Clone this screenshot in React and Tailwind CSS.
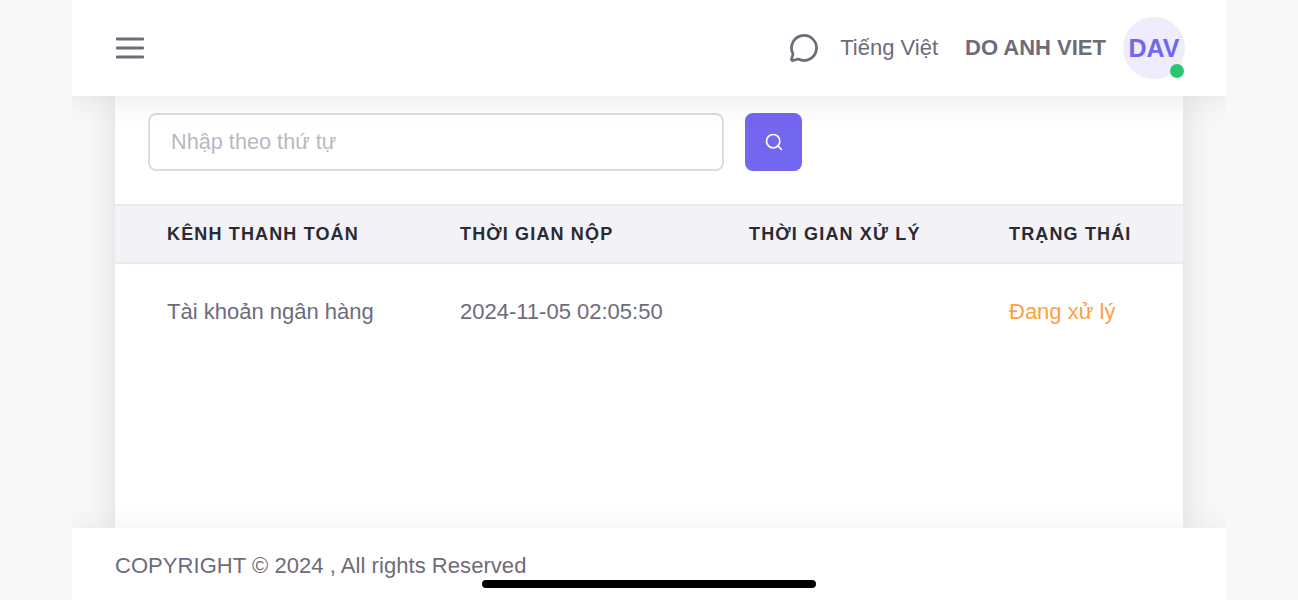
import React from 'react';
import { MessageCircle, Search } from 'lucide-react';

const FONT = "font-['Liberation_Sans',Arial,sans-serif]";

function Header() {
  return (
    <header className="relative z-10 flex h-24 shrink-0 items-center justify-between bg-white pl-[44px] pr-[41px] shadow-[0_0_32px_rgba(40,40,50,0.13)]">
      <svg width="28" height="24" viewBox="0 0 28 24" className="text-[#6e6b7b]">
        <path d="M1 3h26M1 12h26M1 21h26" stroke="currentColor" strokeWidth="2.8" strokeLinecap="round" />
      </svg>
      <div className="flex items-center">
        <MessageCircle size={30} strokeWidth={2.2} className="text-[#6e6b7b]" />
        <span className="ml-[21px] pb-[2px] text-[22px] text-[#6e6b7b]">Tiếng Việt</span>
        <span className="ml-[27px] pb-[2px] text-[22px] font-bold text-[#6e6b7b]">DO ANH VIET</span>
        <div className="relative ml-[17px] flex h-[62px] w-[62px] items-center justify-center rounded-full bg-[#eeecfd]">
          <span className="pt-[2px] text-[25px] font-bold text-[#7367f0]">DAV</span>
          <span className="absolute bottom-[1px] right-[1px] h-[14px] w-[14px] rounded-full bg-[#28c76f]" />
        </div>
      </div>
    </header>
  );
}

function SearchBar() {
  return (
    <div className="flex gap-[21px] pl-[33px] pt-[17px] pb-[33px]">
      <input
        placeholder="Nhập theo thứ tự"
        className="h-[58px] w-[576px] rounded-lg border-[2px] border-[#dddbe3] bg-white px-[21px] text-[21.7px] outline-none placeholder:text-[#b9b9c3]"
      />
      <button type="button" className="flex h-[58px] w-[57px] items-center justify-center rounded-lg bg-[#7367f0]">
        <Search size={20} strokeWidth={2} className="text-white" />
      </button>
    </div>
  );
}

function PaymentTable() {
  return (
    <div>
      <div className="flex h-[60px] items-center border-y-2 border-[#ebe9f1] bg-[#f3f2f7] text-[18px] font-bold tracking-[1.15px] text-[#2a2a32]">
        <div className="w-[293px] pl-[52px]">KÊNH THANH TOÁN</div>
        <div className="w-[289px] pl-[52px]">THỜI GIAN NỘP</div>
        <div className="w-[260px] pl-[52px]">THỜI GIAN XỬ LÝ</div>
        <div className="pl-[52px]">TRẠNG THÁI</div>
      </div>
      <div className="flex h-[95px] items-center text-[22px] text-[#6e6b7b]">
        <div className="w-[293px] pl-[52px]">Tài khoản ngân hàng</div>
        <div className="w-[289px] pl-[52px]">2024-11-05 02:05:50</div>
        <div className="w-[260px] pl-[52px]" />
        <div className="pl-[52px] text-[#ff9f43]">Đang xử lý</div>
      </div>
    </div>
  );
}

export default function App() {
  return (
    <div className={`${FONT} relative h-[600px] overflow-hidden bg-[#f8f8f8]`}>
      <div className="mx-auto flex h-full w-[1154px] flex-col overflow-hidden">
        <Header />
        <main className="mx-[43px] min-h-0 flex-1 bg-white shadow-[0_4px_30px_rgba(34,41,47,0.14)]">
          <SearchBar />
          <PaymentTable />
        </main>
        <footer className="relative z-10 flex h-[72px] shrink-0 bg-white pl-[43px] pt-[24px] text-[22px] leading-[28px] tracking-[0.05px] text-[#6e6b7b] shadow-[0_-6px_20px_rgba(60,60,70,0.05)]">
          COPYRIGHT © 2024 , All rights Reserved
        </footer>
      </div>
      {/* home indicator */}
      <div className="absolute bottom-[12px] left-[482px] z-20 h-2 w-[334px] rounded-full bg-black" />
    </div>
  );
}
